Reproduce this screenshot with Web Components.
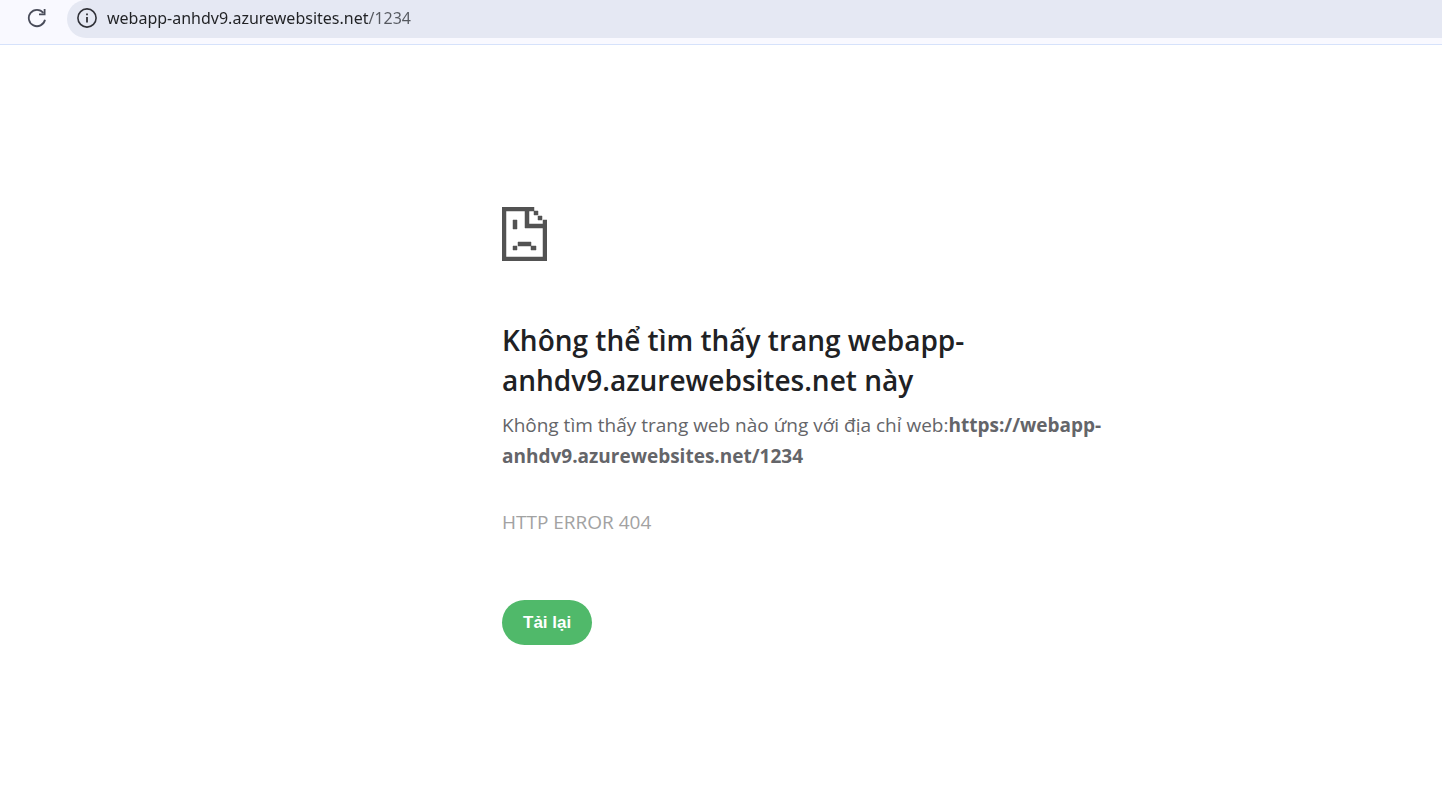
<!DOCTYPE html>
<html lang="vi">
<head>
<meta charset="utf-8">
<meta name="viewport" content="width=device-width, initial-scale=1">
<title>webapp-anhdv9.azurewebsites.net</title>
<style>
body { margin: 0; background: #fff; font-family: "Open Sans", "Noto Sans", sans-serif; }
</style>
</head>
<body>
<browser-bar address="webapp-anhdv9.azurewebsites.net/1234"></browser-bar>
<error-page>
  <span slot="title">Không thể tìm thấy trang webapp-anhdv9.azurewebsites.net này</span>
  <span slot="message">Không tìm thấy trang web nào ứng với địa chỉ web:<strong>https://webapp-anhdv9.azurewebsites.net/1234</strong></span>
  <span slot="code">HTTP ERROR 404</span>
  <reload-button slot="action">Tải lại</reload-button>
</error-page>

<script>
class BrowserBar extends HTMLElement {
  constructor() {
    super();
    this.attachShadow({ mode: "open" }).innerHTML = `
      <style>
        :host { display: flex; align-items: center; gap: 17px; padding: 0 0 6px 24px; background: #f9f9ff; border-bottom: 1px solid #d6e2fb; }
        button { display: grid; place-items: center; width: 26px; height: 36px; margin: 0 0 2px; padding: 0; border: 0; background: none; }
        svg { display: block; }
        label { flex: 1; display: flex; align-items: center; gap: 10px; height: 38px; padding: 0 0 2px 10px; border-radius: 20px 0 0 20px; background: #e5e8f3; box-sizing: border-box; }
        input { flex: 1; min-width: 0; height: 28px; padding: 0; border: 0; outline: 0; font: 16px/28px "Noto Sans", "Open Sans", sans-serif; color: transparent; background: linear-gradient(to right, #202124 262px, #55585f 262px); -webkit-background-clip: text; background-clip: text; caret-color: #202124; }
      </style>
      <button type="button" aria-label="Tải lại trang">
        <svg width="20" height="20" viewBox="0 0 20 20" fill="none" stroke="#494c5a" stroke-width="1.8"><path d="M18 11.8A8.2 8.2 0 1 1 16.4 4.9"/><path d="M17.6 1V6.3H12"/></svg>
      </button>
      <label>
        <svg width="20" height="20" viewBox="0 0 20 20"><circle cx="10" cy="10" r="9.1" fill="none" stroke="#303138" stroke-width="1.6"/><path d="M9.1 9h1.8v5.5H9.1zM9.1 5.5h1.8v1.8H9.1z" fill="#303138"/></svg>
        <input type="text" aria-label="Địa chỉ web" spellcheck="false">
      </label>`;
    this.shadowRoot.querySelector("input").value = this.getAttribute("address");
  }
}
customElements.define("browser-bar", BrowserBar);

class SadPage extends HTMLElement {
  constructor() {
    super();
    this.attachShadow({ mode: "open" }).innerHTML = `
      <style>:host { display: block; } svg { display: block; }</style>
      <svg width="45" height="54" viewBox="0 0 45 54" fill="#535353" stroke="#535353" stroke-width=".5" aria-hidden="true">
        <path d="M0 0H32V4H27V17H41V13H45V54H0ZM4 4V50H41V21H23V4Z" fill-rule="evenodd"/>
        <path d="M32 4H36V8H32ZM36 9H40V13H36ZM11 13H15V22H11ZM16 35H29V39H16ZM11 39H15V43H11ZM29 39H34V43H29Z"/>
      </svg>`;
  }
}
customElements.define("sad-page", SadPage);

class ReloadButton extends HTMLElement {
  constructor() {
    super();
    this.attachShadow({ mode: "open" }).innerHTML = `
      <style>
        :host { display: inline-block; }
        button { display: block; height: 45px; padding: 0 21px; border: 0; border-radius: 23px; background: #50b96a; color: #fff; font: bold 17px/45px "Liberation Sans", Arial, sans-serif; }
      </style>
      <button type="button"><slot></slot></button>`;
    this.shadowRoot.querySelector("button").addEventListener("click", () => location.reload());
  }
}
customElements.define("reload-button", ReloadButton);

class ErrorPage extends HTMLElement {
  constructor() {
    super();
    this.attachShadow({ mode: "open" }).innerHTML = `
      <style>
        :host { display: grid; grid-template-columns: 502fr 640fr 300fr; padding: 162px 0 24px; }
        main { grid-column: 2; min-width: 0; }
        h1 { margin: 59px 0 10px; font-size: 28px; line-height: 40px; font-weight: 600; color: #202124; }
        p { margin: 0; font-size: 19px; line-height: 31px; color: #646569; }
        .code { margin: 35px 0 62px; color: #a2a2a2; }
      </style>
      <main>
        <sad-page></sad-page>
        <h1><slot name="title"></slot></h1>
        <p><slot name="message"></slot></p>
        <p class="code"><slot name="code"></slot></p>
        <slot name="action"></slot>
      </main>`;
  }
}
customElements.define("error-page", ErrorPage);
</script>
</body>
</html>
